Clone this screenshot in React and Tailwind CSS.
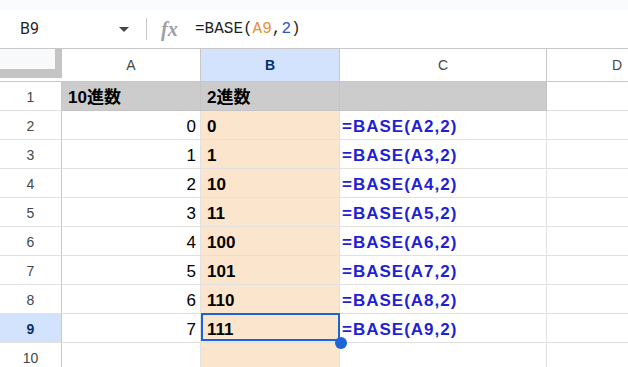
import React from "react";

const rows = [
  { n: 2, a: "0", b: "0", c: "=BASE(A2,2)" },
  { n: 3, a: "1", b: "1", c: "=BASE(A3,2)" },
  { n: 4, a: "2", b: "10", c: "=BASE(A4,2)" },
  { n: 5, a: "3", b: "11", c: "=BASE(A5,2)" },
  { n: 6, a: "4", b: "100", c: "=BASE(A6,2)" },
  { n: 7, a: "5", b: "101", c: "=BASE(A7,2)" },
  { n: 8, a: "6", b: "110", c: "=BASE(A8,2)" },
  { n: 9, a: "7", b: "111", c: "=BASE(A9,2)", sel: true },
];

export default function App() {
  return (
    <div className="w-[628px] h-[367px] overflow-hidden bg-white relative font-['Liberation_Sans','Noto_Sans_CJK_JP',sans-serif] text-[#000]">
      {/* top strip */}
      <div className="h-[10px] bg-[#f9fbfd]" />
      {/* formula bar */}
      <div className="h-[39px] flex items-center border-b border-[#c7c7c7] bg-white">
        <div className="w-[119px] pl-[20px] text-[16px] text-[#1f1f1f] font-['Roboto','Liberation_Sans',sans-serif]">B9</div>
        <svg width="10" height="5" viewBox="0 0 10 5">
          <path d="M0 0 L10 0 L5 5 Z" fill="#444746" />
        </svg>
        <div className="ml-[17px] w-px h-[22px] bg-[#c7c7c7]" />
        <span className="ml-[14px] w-[20px] text-[20px] leading-none italic text-[#9aa0a6] font-['Liberation_Serif',serif] font-bold">fx</span>
        <span className="ml-[14px] text-[16px] font-['Liberation_Mono',monospace] text-[#1f1f1f] whitespace-pre">
          =BASE(<span className="text-[#e8913c]">A9</span>,<span className="text-[#2a56c6]">2</span>)
        </span>
      </div>
      {/* column headers */}
      <div className="flex h-[33px] border-b border-[#c7c7c7]">
        <div className="w-[62px] h-full relative bg-white shrink-0">
          <div className="absolute left-0 top-0 w-[62px] h-[29px] bg-[#f8f9fa]" />
          <div className="absolute right-0 top-0 w-[7px] h-[29px] bg-[#c4c4c4]" />
          <div className="absolute left-0 top-[20px] w-[62px] h-[9px] bg-[#c4c4c4]" />
        </div>
        <div className="w-[139px] shrink-0 flex items-center justify-center border-r border-[#c7c7c7] text-[14px] text-[#444746]">A</div>
        <div className="w-[139px] shrink-0 flex items-center justify-center border-r border-[#c7c7c7] bg-[#d3e3fd] text-[14px] font-bold text-[#062e6f]">B</div>
        <div className="w-[207px] shrink-0 flex items-center justify-center border-r border-[#c7c7c7] text-[14px] text-[#444746]">C</div>
        <div className="w-[140px] shrink-0 flex items-center justify-center text-[14px] text-[#444746]">D</div>
      </div>
      {/* row 1 */}
      <div className="flex h-[29px]">
        <div className="w-[62px] shrink-0 flex items-center justify-center pt-[2px] border-r border-b border-[#c7c7c7] border-b-[#e1e1e1] text-[14px] text-[#444746]">1</div>
        <div className="w-[139px] shrink-0 flex items-end pl-[6px] pb-[2px] bg-[#cccccc] border-r border-b border-[#c4c4c4] text-[17px] leading-[20px] font-bold">10進数</div>
        <div className="w-[139px] shrink-0 flex items-end pl-[6px] pb-[2px] bg-[#cccccc] border-r border-b border-[#c4c4c4] text-[17px] leading-[20px] font-bold">2進数</div>
        <div className="w-[207px] shrink-0 bg-[#cccccc] border-r border-b border-[#c4c4c4]" />
        <div className="w-[140px] shrink-0 border-b border-[#e1e1e1]" />
      </div>
      {rows.map((r) => (
        <div key={r.n} className="flex h-[29px]">
          <div
            className={
              r.sel
                ? "w-[62px] shrink-0 flex items-center justify-center pt-[2px] border-r border-b border-[#c7c7c7] border-b-[#e1e1e1] bg-[#d3e3fd] text-[14px] font-bold text-[#062e6f]"
                : "w-[62px] shrink-0 flex items-center justify-center pt-[2px] border-r border-b border-[#c7c7c7] border-b-[#e1e1e1] text-[14px] text-[#444746]"
            }
          >
            {r.n}
          </div>
          <div className="w-[139px] shrink-0 flex items-end justify-end pr-[4px] pb-[2px] border-r border-b border-[#e1e1e1] text-[17px] leading-[20px]">{r.a}</div>
          <div className="w-[139px] shrink-0 relative flex items-end pl-[6px] pb-[2px] bg-[#fce5cd] border-r border-b border-[#e1e1e1] text-[17px] leading-[20px] font-bold">
            {r.b}
            {r.sel && (
              <>
                <div className="absolute left-0 -top-px -right-px bottom-px border-2 border-[#1b63d6]" />
                <div className="absolute left-[134px] top-[23px] w-[12px] h-[12px] rounded-full bg-[#1b63d6] z-10" />
              </>
            )}
          </div>
          <div className="w-[207px] shrink-0 flex items-end pl-[2px] pb-[2px] border-r border-b border-[#e1e1e1] text-[17px] leading-[20px] font-bold text-[#1f1fd6] tracking-[1px]">{r.c}</div>
          <div className="w-[140px] shrink-0 border-b border-[#e1e1e1]" />
        </div>
      ))}
      {/* row 10 */}
      <div className="flex h-[29px]">
        <div className="w-[62px] shrink-0 flex items-center justify-center pt-[2px] border-r border-[#c7c7c7] text-[14px] text-[#444746]">10</div>
        <div className="w-[139px] shrink-0 border-r border-[#e1e1e1]" />
        <div className="w-[139px] shrink-0 bg-[#fce5cd] border-r border-[#e1e1e1]" />
        <div className="w-[207px] shrink-0 border-r border-[#e1e1e1]" />
        <div className="w-[140px] shrink-0" />
      </div>
    </div>
  );
}
